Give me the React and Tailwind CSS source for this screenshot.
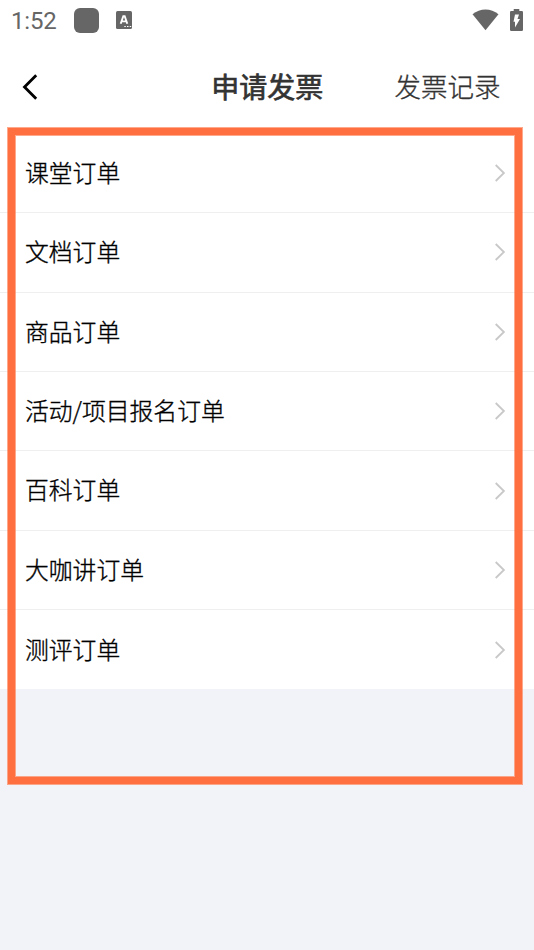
const orders = [
  '课堂订单',
  '文档订单',
  '商品订单',
  '活动/项目报名订单',
  '百科订单',
  '大咖讲订单',
  '测评订单',
];

function StatusBar() {
  return (
    <div className="flex h-10 items-center pl-[11px] pr-[11px] text-[#666]">
      <span className="w-[63px] font-[Roboto,sans-serif] text-[24px] leading-10 tracking-[-0.2px] pt-[2px]">1:52</span>
      <span className="size-[25px] rounded-[6px] bg-[#666]" />
      <svg className="ml-[17px]" width="16" height="18" viewBox="0 0 16 18">
        <rect width="16" height="18" rx="1.5" fill="#666" />
        <path d="M4.7 12.7 7.3 5.2H8.7L11.3 12.7M5.8 10.4h4.4" fill="none" stroke="#fff" strokeWidth="1.9" />
        <path d="M8.3 15.5h1.5M11 15.5h1.5M13.7 15.5h1.5" stroke="#fff" strokeWidth="1.2" />
      </svg>
      <svg className="ml-auto" width="27" height="22" viewBox="0 0 27 22">
        <path d="M0.5 5.3C8-1 19-1 26.5 5.3L13.5 21.3Z" fill="#666" />
      </svg>
      <svg className="ml-[11px]" width="13" height="22" viewBox="0 0 13 22">
        <path d="M1.2 2H3.7V0H9.3V2H11.8Q13 2 13 3.2V20.8Q13 22 11.8 22H1.2Q0 22 0 20.8V3.2Q0 2 1.2 2Z" fill="#666" />
        <path d="M5 5.5H9L7.5 10H10L5 18.5V12.7H3.5Z" fill="#fff" />
      </svg>
    </div>
  );
}

function NavBar() {
  return (
    <header className="grid h-[93.75px] grid-cols-[1fr_auto_1fr] items-center pl-[22px] pr-[33.5px]">
      <svg width="17" height="26" viewBox="0 0 17 26" fill="none" stroke="#000" strokeWidth="2.8">
        <path d="M14.2 1.2 2.5 13 14.2 24.8" />
      </svg>
      <h1 className="ml-[12px] pb-px text-[28px] font-normal text-[#333] [-webkit-text-stroke:0.7px_#333]">申请发票</h1>
      <span className="justify-self-end pb-[2px] text-[26.5px] font-light text-[#333] [-webkit-text-stroke:0.3px_#333]">发票记录</span>
    </header>
  );
}

function OrderRow({ label }) {
  return (
    <li className="flex h-[79.4px] items-center justify-between border-b border-[#efefef] pl-[25px] pr-[28px] last:h-[79px] last:border-b-0">
      <span className="pb-[2.4px] text-[23.8px] font-light text-black [-webkit-text-stroke:0.35px_#000]">{label}</span>
      <svg width="12" height="18" viewBox="0 0 12 18" fill="none" stroke="#c8c8c8" strokeWidth="1.8">
        <path d="M1.7 1 9.9 9 1.7 17" />
      </svg>
    </li>
  );
}

export default function App() {
  return (
    <div className="relative h-[950px] w-[534px] overflow-hidden bg-[#f2f3f8] font-['Noto_Sans_CJK_SC',sans-serif]">
      <div className="bg-white">
        <StatusBar />
        <NavBar />
        <ul>
          {orders.map((label) => (
            <OrderRow key={label} label={label} />
          ))}
        </ul>
      </div>
      <div className="pointer-events-none absolute left-[8px] top-[128px] h-[656px] w-[514px] border-7 border-[#ff6f3f] shadow-[0_0_0_1px_#ff6f3f99,inset_0_0_0_1px_#ff6f3f99]" />
    </div>
  );
}
